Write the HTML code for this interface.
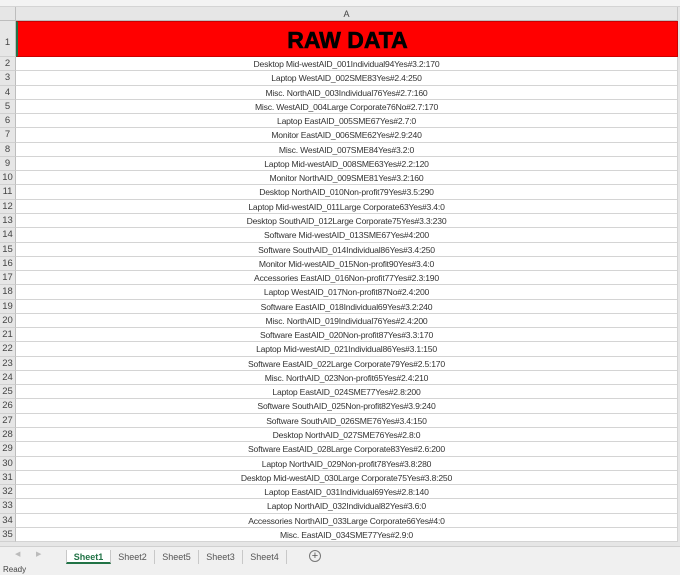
<!DOCTYPE html>
<html><head><style>
*{margin:0;padding:0;box-sizing:border-box}
body{width:680px;height:575px;overflow:hidden;background:#e6e6e6;font-family:"Liberation Sans",Calibri,sans-serif;position:relative}
.top{position:absolute;left:0;top:0;width:680px;height:7px;background:#f3f3f3;border-bottom:1px solid #d4d4d4}
.colh{position:absolute;left:16px;top:7px;width:662px;height:14px;background:#e6e6e6;border-right:1px solid #c8c8c8;border-bottom:1px solid #bdbdbd;font-size:9px;color:#444;text-align:center;line-height:14px}
.corner{position:absolute;left:0;top:7px;width:16px;height:14px;background:#e6e6e6;border-right:1px solid #bdbdbd;border-bottom:1px solid #bdbdbd}
.r1{position:absolute;left:16px;top:21px;width:662px;height:36px;background:#ff0000;border:1px solid #c00;border-left:2px solid #217346;font:bold 23px "Liberation Sans",Arial,sans-serif;text-align:center;line-height:36px;color:#000;-webkit-text-stroke:0.6px #000}
.rh{position:absolute;left:0;width:16px;background:#e6e6e6;border-right:1px solid #bdbdbd;border-bottom:1px solid #d0d0d0;font-size:9.5px;color:#444;text-align:center}
.c{position:absolute;left:16px;width:662px;background:#fff;border-bottom:1px solid #d4d4d4;border-right:1px solid #d4d4d4;font-size:8.6px;letter-spacing:-0.2px;color:#333;text-align:center;white-space:nowrap}
.tabs{position:absolute;left:0;top:546px;width:680px;height:19px;background:#f0f0f0;border-top:1px solid #d0d0d0;font-size:9px;color:#555}
.tab{position:absolute;top:3px;height:14px;line-height:14px;text-align:center;border-right:1px solid #c8c8c8}
.status{position:absolute;left:0;top:565px;width:680px;height:10px;background:#f0f0f0;font-size:8px;color:#444;padding-left:3px;line-height:10px}
</style></head><body>
<div class="top"></div>
<div class="corner"></div>
<div class="colh">A</div>
<div class="rh" style="top:21px;height:36px;line-height:44px">1</div>
<div class="r1">RAW DATA</div>
<div id="rows"></div>
<script>
var d=["Desktop Mid-westAID_001Individual94Yes#3.2:170","Laptop WestAID_002SME83Yes#2.4:250","Misc. NorthAID_003Individual76Yes#2.7:160","Misc. WestAID_004Large Corporate76No#2.7:170","Laptop EastAID_005SME67Yes#2.7:0","Monitor EastAID_006SME62Yes#2.9:240","Misc. WestAID_007SME84Yes#3.2:0","Laptop Mid-westAID_008SME63Yes#2.2:120","Monitor NorthAID_009SME81Yes#3.2:160","Desktop NorthAID_010Non-profit79Yes#3.5:290","Laptop Mid-westAID_011Large Corporate63Yes#3.4:0","Desktop SouthAID_012Large Corporate75Yes#3.3:230","Software Mid-westAID_013SME67Yes#4:200","Software SouthAID_014Individual86Yes#3.4:250","Monitor Mid-westAID_015Non-profit90Yes#3.4:0","Accessories EastAID_016Non-profit77Yes#2.3:190","Laptop WestAID_017Non-profit87No#2.4:200","Software EastAID_018Individual69Yes#3.2:240","Misc. NorthAID_019Individual76Yes#2.4:200","Software EastAID_020Non-profit87Yes#3.3:170","Laptop Mid-westAID_021Individual86Yes#3.1:150","Software EastAID_022Large Corporate79Yes#2.5:170","Misc. NorthAID_023Non-profit65Yes#2.4:210","Laptop EastAID_024SME77Yes#2.8:200","Software SouthAID_025Non-profit82Yes#3.9:240","Software SouthAID_026SME76Yes#3.4:150","Desktop NorthAID_027SME76Yes#2.8:0","Software EastAID_028Large Corporate83Yes#2.6:200","Laptop NorthAID_029Non-profit78Yes#3.8:280","Desktop Mid-westAID_030Large Corporate75Yes#3.8:250","Laptop EastAID_031Individual69Yes#2.8:140","Laptop NorthAID_032Individual82Yes#3.6:0","Accessories NorthAID_033Large Corporate66Yes#4:0","Misc. EastAID_034SME77Yes#2.9:0"];
var h="",H=14.27;
for(var i=0;i<d.length;i++){var t=57+i*H;
h+='<div class="rh" style="top:'+t+'px;height:'+H+'px;line-height:'+H+'px">'+(i+2)+'</div><div class="c" style="top:'+t+'px;height:'+H+'px;line-height:'+H+'px">'+d[i]+'</div>';}
document.getElementById("rows").innerHTML=h;
</script>
<div class="tabs">
<span style="position:absolute;left:15px;top:3px;color:#bbb;font-size:7px">&#9664;</span><span style="position:absolute;left:36px;top:3px;color:#bbb;font-size:7px">&#9654;</span>
<div class="tab" style="left:66px;width:45px;background:#fff;color:#217346;font-weight:bold;border-bottom:2px solid #217346;border-left:1px solid #c8c8c8">Sheet1</div>
<div class="tab" style="left:111px;width:44px">Sheet2</div>
<div class="tab" style="left:155px;width:44px">Sheet5</div>
<div class="tab" style="left:199px;width:44px">Sheet3</div>
<div class="tab" style="left:243px;width:44px">Sheet4</div>
<div style="position:absolute;left:309px;top:3px;width:12px;height:12px;border:1px solid #777;border-radius:50%;text-align:center;line-height:10px;font-size:11px;color:#555">+</div>
</div>
<div class="status">Ready</div>
</body></html>
